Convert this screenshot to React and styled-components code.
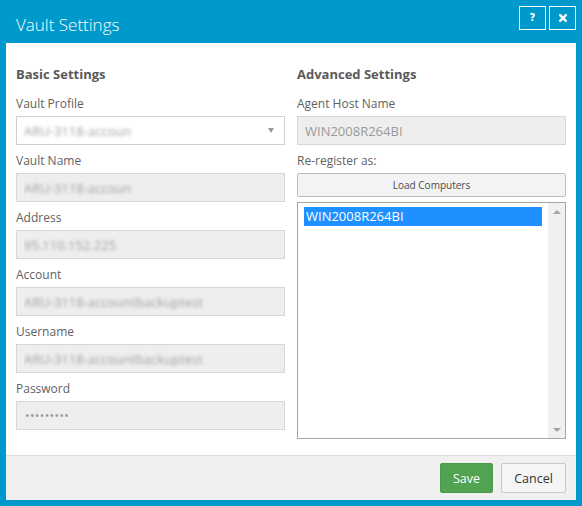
import React from "react";
import styled, { createGlobalStyle } from "styled-components";

const GlobalStyle = createGlobalStyle`
  html, body {
    margin: 0;
    padding: 0;
    background: #0099cc;
  }
  body {
    font-family: "Open Sans", "Liberation Sans", sans-serif;
  }
`;

const basicFields = [
  { label: "Vault Name", value: "ARU-3118-accoun" },
  { label: "Address", value: "95.110.152.225" },
  { label: "Account", value: "ARU-3118-accountbackuptest" },
  { label: "Username", value: "ARU-3118-accountbackuptest" },
];

const App = () => {
  return (
    <>
      <GlobalStyle />
      <Window>
        <TitleBar>
          <Title>Vault Settings</Title>
          <TitleButtons>
            <IconButton aria-label="help">
              <HelpGlyph>?</HelpGlyph>
            </IconButton>
            <IconButton aria-label="close">
              <svg width="8" height="8" viewBox="0 0 8 8">
                <path
                  d="M1.2 1.2 L6.8 6.8 M6.8 1.2 L1.2 6.8"
                  stroke="#fff"
                  strokeWidth="2.4"
                  strokeLinecap="square"
                />
              </svg>
            </IconButton>
          </TitleButtons>
        </TitleBar>

        <Body>
          <Column>
            <Heading>Basic Settings</Heading>
            <Field>
              <Label>Vault Profile</Label>
              <SelectBox>
                <Blurred>ARU-3118-accoun</Blurred>
                <Caret />
              </SelectBox>
            </Field>
            {basicFields.map((f) => (
              <Field key={f.label}>
                <Label>{f.label}</Label>
                <TextInput readOnly value={f.value} $blur />
              </Field>
            ))}
            <Field>
              <Label>Password</Label>
              <TextInput readOnly value={"•••••••••"} $dots />
            </Field>
          </Column>

          <Column>
            <Heading>Advanced Settings</Heading>
            <Field>
              <Label>Agent Host Name</Label>
              <TextInput readOnly value="WIN2008R264BI" />
            </Field>
            <Label>Re-register as:</Label>
            <LoadButton>Load Computers</LoadButton>
            <ListBox>
              <ListItems>
                <ListItem $selected>WIN2008R264BI</ListItem>
              </ListItems>
              <ScrollTrack>
                <Arrow $up />
                <Arrow />
              </ScrollTrack>
            </ListBox>
          </Column>
        </Body>

        <Footer>
          <SaveButton>Save</SaveButton>
          <CancelButton>Cancel</CancelButton>
        </Footer>
      </Window>
    </>
  );
};

const Window = styled.div`
  width: 582px;
  height: 506px;
  box-sizing: border-box;
  background: #0099cc;
  padding: 0 6px 6px;
  display: flex;
  flex-direction: column;
`;

const TitleBar = styled.div`
  height: 43px;
  display: flex;
  align-items: flex-start;
  justify-content: space-between;
  padding-left: 10px;
`;

const Title = styled.div`
  color: #fff;
  font-size: 17px;
  font-weight: 300;
  line-height: 20px;
  margin-top: 15px;
`;

const TitleButtons = styled.div`
  display: flex;
  gap: 3px;
  margin-top: 6px;
`;

const IconButton = styled.button`
  width: 27px;
  height: 24px;
  box-sizing: border-box;
  border: 1px solid #fff;
  background: transparent;
  padding: 0;
  display: flex;
  align-items: center;
  justify-content: center;
  cursor: pointer;
`;

const HelpGlyph = styled.span`
  color: #fff;
  font-size: 10px;
  font-weight: 800;
  line-height: 1;
  font-family: "DejaVu Sans", sans-serif;
`;

const Body = styled.div`
  flex: 1;
  background: #fff;
  display: grid;
  grid-template-columns: 269px 269px;
  column-gap: 12px;
  padding: 22px 10px 16px;
  border-bottom: 1px solid #dddddd;
`;

const Column = styled.div`
  display: flex;
  flex-direction: column;
`;

const Heading = styled.div`
  font-size: 13px;
  font-weight: 700;
  line-height: 18px;
  color: #5a5a5a;
  margin-bottom: 11px;
`;

const Field = styled.div`
  display: flex;
  flex-direction: column;
  margin-bottom: 6px;
`;

const Label = styled.div`
  font-size: 12px;
  line-height: 17px;
  color: #5f5f5f;
  padding-top: 1px;
  margin-bottom: 4px;
`;

const TextInput = styled.input`
  height: 29px;
  box-sizing: border-box;
  border: 1px solid #d6d6d6;
  background: #eeeeee;
  padding: 0 7px;
  font-family: inherit;
  font-size: 13px;
  color: ${(p) => (p.$blur ? "transparent" : "#9a9a9a")};
  text-shadow: ${(p) => (p.$blur ? "0 0 3.5px #a0a0a0" : "none")};
  outline: none;
  ${(p) =>
    p.$dots && "font-size: 12px; letter-spacing: 0.4px; padding-left: 8px;"}
`;

const SelectBox = styled.div`
  height: 29px;
  box-sizing: border-box;
  border: 1px solid #cfcfcf;
  background: #fff;
  padding: 0 7px;
  display: flex;
  align-items: center;
  justify-content: space-between;
`;

const Blurred = styled.span`
  font-size: 13px;
  color: transparent;
  text-shadow: 0 0 3.5px #a0a0a0;
`;

const Caret = styled.span`
  width: 0;
  height: 0;
  border-left: 3.5px solid transparent;
  border-right: 3.5px solid transparent;
  border-top: 5px solid #9a9a9a;
  margin-right: 3px;
`;

const LoadButton = styled.button`
  height: 24px;
  box-sizing: border-box;
  border: 1px solid #bdbdbd;
  border-radius: 2px;
  background: #f3f3f3;
  font-family: inherit;
  font-size: 10px;
  color: #4a4a4a;
  padding: 0;
  cursor: pointer;
`;

const ListBox = styled.div`
  margin-top: 5px;
  flex: 1;
  border: 1px solid #a6a6a6;
  display: flex;
  background: #fff;
`;

const ListItems = styled.div`
  flex: 1;
  padding: 4px 6px;
`;

const ListItem = styled.div`
  height: 19px;
  line-height: 19px;
  padding-left: 2px;
  font-size: 13px;
  background: ${(p) => (p.$selected ? "#1e90ff" : "transparent")};
  color: ${(p) => (p.$selected ? "#fff" : "#333")};
`;

const ScrollTrack = styled.div`
  width: 17px;
  background: #f0f0f0;
  display: flex;
  flex-direction: column;
  justify-content: space-between;
  align-items: center;
  padding: 7px 0 6px;
`;

const Arrow = styled.span`
  width: 0;
  height: 0;
  border-left: 4px solid transparent;
  border-right: 4px solid transparent;
  ${(p) =>
    p.$up
      ? "border-bottom: 4px solid #a3a3a3;"
      : "border-top: 4px solid #a3a3a3;"}
`;

const Footer = styled.div`
  height: 44px;
  background: #f0f0f0;
  display: flex;
  align-items: center;
  justify-content: flex-end;
  gap: 8px;
  padding-right: 10px;
`;

const BaseButton = styled.button`
  height: 30px;
  box-sizing: border-box;
  border-radius: 2px;
  font-family: inherit;
  font-size: 12.5px;
  padding: 0;
  cursor: pointer;
`;

const SaveButton = styled(BaseButton)`
  width: 53px;
  background: #51a351;
  border: 1px solid #4a9a4a;
  color: #fff;
`;

const CancelButton = styled(BaseButton)`
  width: 65px;
  background: #f5f5f5;
  border: 1px solid #c8c8c8;
  color: #333;
`;

export default App;
